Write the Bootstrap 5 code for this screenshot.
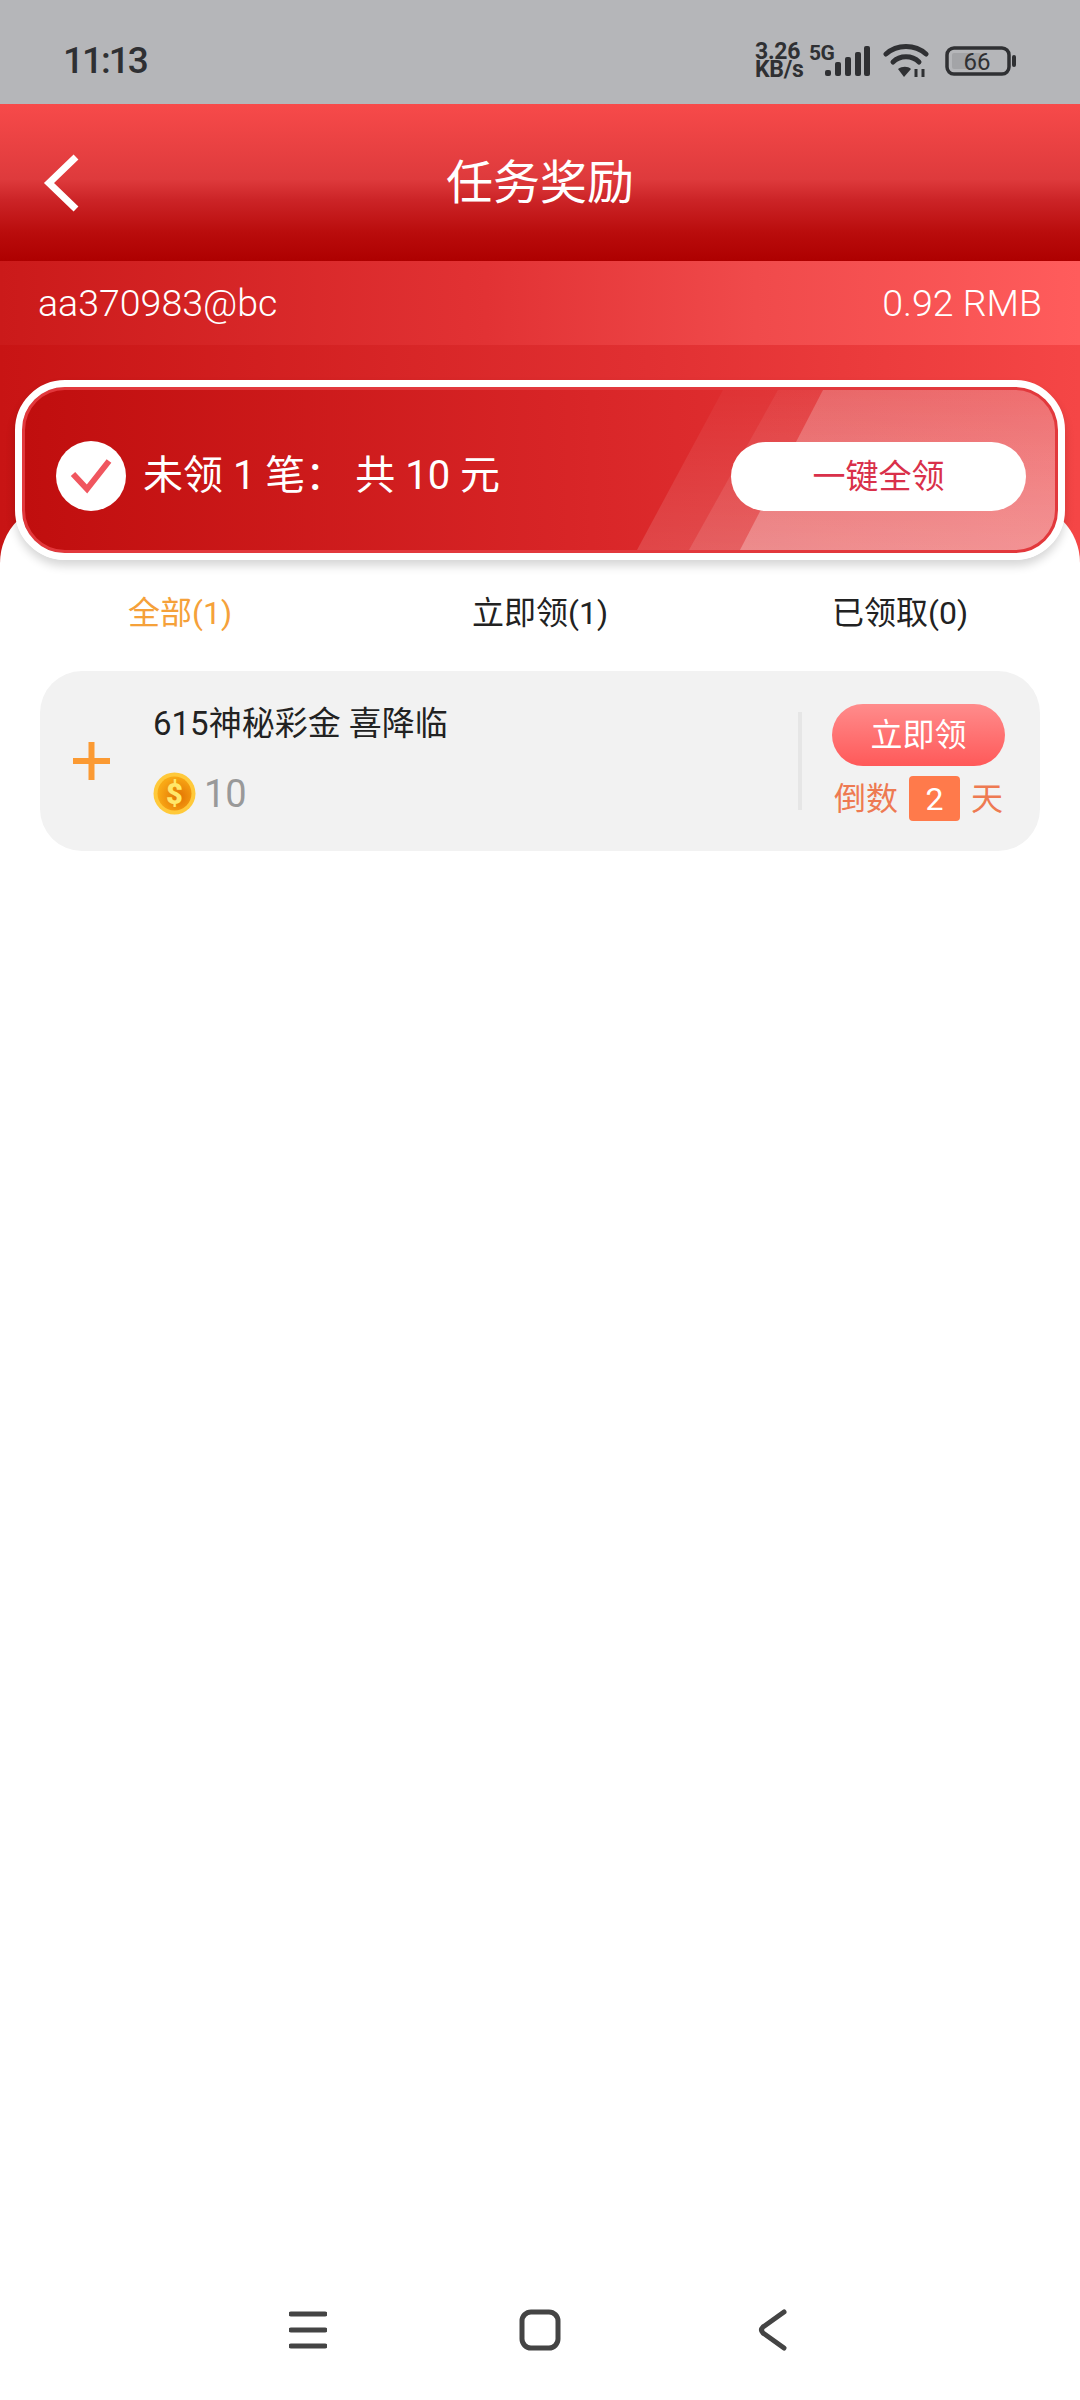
<!DOCTYPE html>
<html lang="zh-CN">
<head>
    <meta charset="UTF-8">
    <meta name="viewport" content="width=device-width, initial-scale=1.0">
    <title>任务奖励</title>
    <link rel="stylesheet" href="https://cdn.jsdelivr.net/npm/bootstrap@5.3.2/dist/css/bootstrap.min.css">
    <style>
        body { width: 1080px; height: 2400px; overflow: hidden; background: #fff; font-family: "Roboto", "Noto Sans CJK SC", sans-serif; }
        .app-page { height: 2400px; }

        /* status bar */
        .status-strip { height: 104px; background: #b5b6b9; color: #2f3033; padding: 17px 64px 0 63px; }
        .status-time { font-size: 37px; font-weight: 500; line-height: 1; letter-spacing: -2px; }
        .net-speed { width: 50px; font-size: 23px; font-weight: 700; line-height: 18px; margin-right: 4px; white-space: nowrap; letter-spacing: -.3px; }
        .net-5g { width: 28px; font-size: 21px; font-weight: 700; line-height: 1; margin-right: -12px; align-self: flex-start; letter-spacing: -.5px; }

        /* red header */
        .top-head { height: 157px; background: linear-gradient(180deg, #f74a4a 0%, #de3a3c 48%, #cc2427 61%, #b90c0c 82%, #ae0000 100%); color: #fff; padding-left: 43px; }
        .top-title { font-size: 47px; line-height: 1; left: 0; right: 0; text-align: center; }
        .acct-bar { height: 84px; padding: 0 38px; color: #fff; font-size: 37.5px; font-weight: 300; background: linear-gradient(90deg, #cb1a1a 0%, #e23234 45%, #f04a4b 70%, #ff5c5c 100%); }
        .red-band { height: 218px; background: linear-gradient(90deg, #c81414 0%, #e13032 60%, #f54646 100%); }

        /* summary card */
        .claim-card { height: 180px; margin: -183px 15px 0; padding: 12px 32px 0 34px; border: 7px solid #fff; border-radius: 50px; background: linear-gradient(90deg, #c00e0e 0%, #d92628 55%, #ea3c3e 100%); box-shadow: inset 0 0 0 3px #e2383c, 0 6px 10px rgba(0,0,0,.16); z-index: 2; }
        .claim-stripe { position: absolute; inset: 3px; border-radius: 40px; overflow: hidden; }
        .claim-stripe i { position: absolute; inset: 0; }
        .claim-stripe i:nth-child(1) { background: linear-gradient(180deg, rgba(255,255,255,.03), rgba(255,255,255,.14)); clip-path: polygon(612px 160px, 698px 0, 1040px 0, 1040px 160px); }
        .claim-stripe i:nth-child(2) { background: linear-gradient(180deg, rgba(255,255,255,.05), rgba(255,255,255,.12)); clip-path: polygon(664px 160px, 753px 0, 1040px 0, 1040px 160px); }
        .claim-stripe i:nth-child(3) { background: linear-gradient(180deg, rgba(255,255,255,.2), rgba(255,255,255,.27)); clip-path: polygon(715px 160px, 798px 0, 1040px 0, 1040px 160px); }
        .claim-check { width: 70px; height: 70px; background: #fff; z-index: 1; }
        .claim-text { font-size: 40px; line-height: 1; color: #fff; margin-left: 17px; white-space: pre; z-index: 1; }
        .claim-all { width: 295px; height: 69px; font-size: 33px; line-height: 1; color: #d9304a; background: #fff; border: 0; border-radius: 35px; z-index: 1; }

        /* white sheet */
        .sheet { margin-top: -57px; padding-top: 57px; background: #fff; border-radius: 60px 60px 0 0; z-index: 1; }
        .tab-row { height: 111px; padding-bottom: 6px; }
        .tab-item { width: 360px; text-align: center; font-size: 32px; color: #222; line-height: 1; }
        .tab-item.is-on { color: #f5a13a; }

        /* task row */
        .task-row { height: 180px; margin: 0 40px; background: #f2f2f2; border-radius: 42px; }
        .task-plus { width: 113px; padding-left: 33px; }
        .task-main { width: 645px; }
        .task-name { font-size: 33px; line-height: 1; color: #222; margin-bottom: 32px; }
        .task-coin { font-size: 38px; line-height: 42px; color: #999; }
        .task-split { width: 4px; height: 98px; background: #e6e6e6; }
        .task-side { width: 173px; margin-left: 30px; padding-top: 3px; }
        .take-btn { width: 173px; height: 62px; font-size: 32px; line-height: 1; color: #fff; border: 0; border-radius: 31px; background: linear-gradient(180deg, #ff8c8c, #ff5959); }
        .count-line { margin-top: 10px; font-size: 32px; line-height: 46px; color: #ee7a52; }
        .count-box { width: 51px; height: 45px; margin: 0 11px; background: #ff7a4b; color: #fff; border-radius: 4px; text-align: center; }

        /* nav bar */
        .nav-keys { left: 0; right: 0; bottom: 49px; height: 42px; z-index: 3; }
        .nav-keys svg { position: absolute; top: 0; }
    </style>
</head>
<body>
    <div class="app-page d-flex flex-column position-relative">

        <div class="status-strip d-flex align-items-center justify-content-between">
            <span class="status-time">11:13</span>
            <div class="d-flex align-items-center">
                <div class="net-speed">3.26<br>KB/s</div>
                <span class="net-5g">5G</span>
                <svg width="45" height="30" viewBox="0 0 45 30" style="margin-right:13px">
                    <g fill="#2f3033">
                        <rect x="0" y="24" width="6" height="6" rx="2"/>
                        <rect x="10" y="16" width="6" height="14" rx="2"/>
                        <rect x="20" y="11" width="6" height="19" rx="2"/>
                        <rect x="30" y="6" width="6" height="24" rx="2"/>
                        <rect x="39" y="0" width="6" height="30" rx="2"/>
                    </g>
                </svg>
                <svg width="46" height="35" viewBox="0 0 46 35" style="margin-right:16px">
                    <g fill="none" stroke="#2f3033" stroke-width="5" stroke-linecap="round">
                        <path d="M3 11 C14 1 32 1 43 11"/>
                        <path d="M10 19 C17 12 29 12 36 19"/>
                    </g>
                    <path d="M15 26 C19 23 25 23 28 26 L21 34 Z" fill="#2f3033"/>
                    <path d="M33 26 V34 M40 26 V34" stroke="#2f3033" stroke-width="3"/>
                </svg>
                <svg width="71" height="30" viewBox="0 0 71 30">
                    <rect x="2" y="2" width="62" height="26" rx="7" fill="none" stroke="#2f3033" stroke-width="3.5"/>
                    <rect x="7" y="7" width="29" height="16" rx="2" fill="#a3a4a7"/>
                    <rect x="67" y="9" width="4" height="12" rx="2" fill="#2f3033"/>
                    <text x="32" y="24" text-anchor="middle" font-family="Roboto, sans-serif" font-size="24" fill="#2f3033">66</text>
                </svg>
            </div>
        </div>

        <div class="top-head d-flex align-items-center position-relative">
            <svg width="36" height="58" viewBox="0 0 36 58">
                <path d="M33 3 L6 29 L33 55" fill="none" stroke="#fff" stroke-width="7"/>
            </svg>
            <div class="top-title position-absolute">任务奖励</div>
        </div>

        <div class="acct-bar d-flex align-items-center justify-content-between">
            <span>aa370983@bc</span>
            <span>0.92 RMB</span>
        </div>

        <div class="red-band"></div>

        <div class="claim-card d-flex align-items-center position-relative">
            <div class="claim-stripe"><i></i><i></i><i></i></div>
            <div class="claim-check rounded-circle d-flex align-items-center justify-content-center">
                <svg width="42" height="36" viewBox="0 0 42 36">
                    <path d="M3 16 L17 31 L39 3" fill="none" stroke="#f0565f" stroke-width="6"/>
                </svg>
            </div>
            <span class="claim-text">未领 1 笔： 共 10 元</span>
            <button class="claim-all ms-auto">一键全领</button>
        </div>

        <div class="sheet flex-grow-1 position-relative">
            <div class="tab-row d-flex align-items-center">
                <div class="tab-item is-on">全部(1)</div>
                <div class="tab-item">立即领(1)</div>
                <div class="tab-item">已领取(0)</div>
            </div>

            <div class="task-row d-flex align-items-center">
                <div class="task-plus">
                    <svg width="37" height="38" viewBox="0 0 37 38" class="d-block">
                        <path d="M0 19 H37 M18.5 0 V38" stroke="#fb9a33" stroke-width="6"/>
                    </svg>
                </div>
                <div class="task-main">
                    <div class="task-name">615神秘彩金 喜降临</div>
                    <div class="task-coin d-flex align-items-center gap-2">
                        <svg width="43" height="43" viewBox="0 0 43 43">
                            <defs>
                                <radialGradient id="coinFill" cx="62%" cy="60%" r="60%">
                                    <stop offset="0" stop-color="#e27203"/>
                                    <stop offset="1" stop-color="#f9a915"/>
                                </radialGradient>
                            </defs>
                            <circle cx="21.5" cy="21.5" r="21" fill="#ffc93a"/>
                            <circle cx="21.5" cy="21.5" r="17" fill="url(#coinFill)"/>
                            <text x="21.5" y="32" text-anchor="middle" font-family="Roboto, sans-serif" font-weight="900" font-size="29" fill="#ffe76a">$</text>
                        </svg>
                        <span>10</span>
                    </div>
                </div>
                <div class="task-split"></div>
                <div class="task-side">
                    <button class="take-btn d-block">立即领</button>
                    <div class="count-line d-flex align-items-center justify-content-center">
                        <span>倒数</span><span class="count-box">2</span><span>天</span>
                    </div>
                </div>
            </div>
        </div>

        <div class="nav-keys position-absolute">
            <svg style="left:289px" width="38" height="42" viewBox="0 0 38 42">
                <path d="M2 5 H36 M2 21 H36 M2 37 H36" stroke="#444" stroke-width="5" stroke-linecap="round"/>
            </svg>
            <svg style="left:519px" width="42" height="42" viewBox="0 0 42 42">
                <rect x="3" y="3" width="36" height="36" rx="9" fill="none" stroke="#444" stroke-width="5"/>
            </svg>
            <svg style="left:758px" width="30" height="42" viewBox="0 0 30 42">
                <path d="M26 3 L5 18 Q2 21 5 24 L26 39" fill="none" stroke="#444" stroke-width="5" stroke-linecap="round"/>
            </svg>
        </div>
    </div>
    <script src="https://cdn.jsdelivr.net/npm/bootstrap@5.3.2/dist/js/bootstrap.bundle.min.js"></script>
</body>
</html>
